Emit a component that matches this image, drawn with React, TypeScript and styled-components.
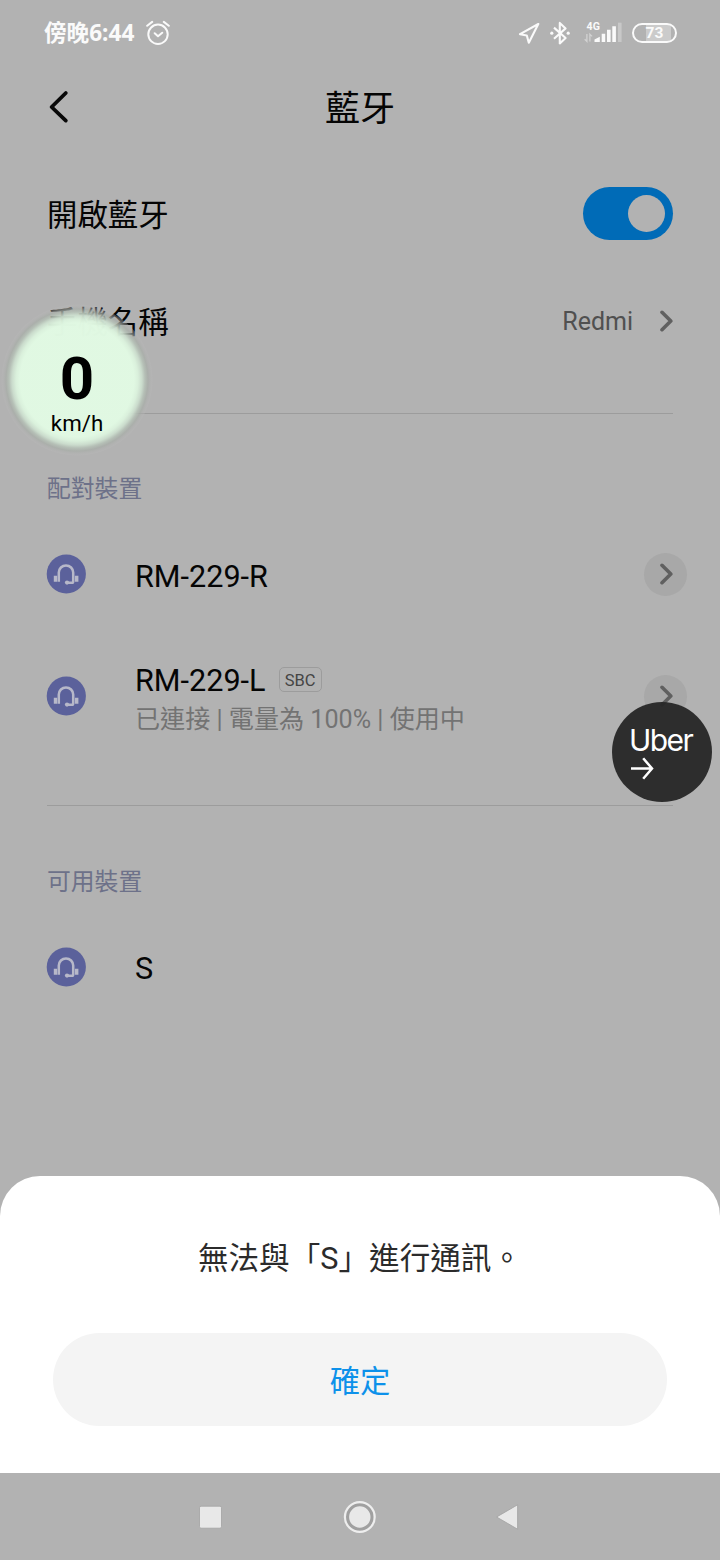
import React from "react";
import styled, { createGlobalStyle } from "styled-components";

const GlobalStyle = createGlobalStyle`
  * { box-sizing: border-box; }
  body { margin: 0; background: #b2b2b2; }
`;

const Screen = styled.div`
  position: relative;
  width: 720px;
  height: 1560px;
  display: flex;
  flex-direction: column;
  background: #b2b2b2;
  color: #050505;
  overflow: hidden;
  font-family: Roboto, "Noto Sans CJK TC", sans-serif;
`;

const StatusBar = styled.header`
  height: 66px;
  padding: 0 43px 0 44px;
  display: flex;
  align-items: center;
  justify-content: space-between;
  color: #fafafa;
`;

const StatusGroup = styled.div<{ $gap: number }>`
  display: flex;
  align-items: center;
  gap: ${(p) => p.$gap}px;
  height: 100%;
`;

const Clock = styled.span`
  font: 700 22.6px/30px "Noto Sans", "Noto Sans CJK TC", sans-serif;
  white-space: nowrap;
`;

const Battery = styled.div`
  width: 45px;
  height: 20px;
  border: 2px solid #fafafa;
  border-radius: 10px;
  display: flex;
  align-items: center;
  justify-content: center;
  background: linear-gradient(90deg, transparent 12px, #cbcbcb 12px, #cbcbcb 37px, transparent 37px);
  font: 700 15.5px/16px Roboto, sans-serif;
`;

const TitleBar = styled.div`
  height: 82px;
  padding: 0 48px;
  display: grid;
  grid-template-columns: 60px 1fr 60px;
  align-items: center;
`;

const Title = styled.h1`
  margin: 0;
  padding-top: 5px;
  text-align: center;
  font-size: 35px;
  font-weight: 400;
  line-height: 46px;
`;

const SettingRow = styled.div<{ $height: number }>`
  height: ${(p) => p.$height}px;
  padding: 0 47px;
  display: flex;
  align-items: center;
  justify-content: space-between;
  font-size: 30.4px;
  line-height: 40px;
`;

const SettingName = styled.span<{ $drop: number }>`
  padding-top: ${(p) => p.$drop}px;
`;

const SettingValue = styled.div`
  display: flex;
  align-items: center;
  gap: 26px;
  font-size: 25px;
  color: #505050;
`;

const ValueText = styled.span`
  padding-top: 2px;
`;

const Toggle = styled.div`
  width: 90px;
  height: 53px;
  padding: 8px;
  border-radius: 27px;
  display: flex;
  justify-content: flex-end;
  background: #006bb7;
`;

const Knob = styled.div`
  width: 37px;
  height: 37px;
  border-radius: 50%;
  background: #b2b2b2;
`;

const Divider = styled.div<{ $space: number }>`
  height: 1px;
  margin: ${(p) => p.$space}px 47px ${(p) => 48 - p.$space}px;
  background: #9c9c9c;
`;

const SectionLabel = styled.h2`
  margin: 0;
  padding: 53px 47px 1px;
  font-size: 23.8px;
  font-weight: 400;
  line-height: 46px;
  color: #6d7189;
`;

const DeviceRow = styled.div`
  height: 122px;
  padding: 0 33px 0 46px;
  display: flex;
  align-items: center;
`;

const DeviceText = styled.div<{ $drop: number }>`
  flex: 1;
  margin-left: 49px;
  padding-top: ${(p) => p.$drop}px;
  display: flex;
  flex-direction: column;
`;

const DeviceName = styled.div`
  display: flex;
  align-items: center;
  gap: 13px;
  font-size: 30.6px;
  line-height: 40px;
`;

const DeviceStatus = styled.div`
  padding-top: 1px;
  font-size: 25.1px;
  line-height: 36px;
  color: #737373;
`;

const Codec = styled.span`
  width: 43px;
  height: 25px;
  margin-bottom: 4px;
  border: 1px solid #9c9c9c;
  border-radius: 5px;
  text-align: center;
  font-size: 16.5px;
  line-height: 25px;
  color: #454545;
`;

const DetailButton = styled.div`
  width: 43px;
  height: 43px;
  border-radius: 50%;
  display: flex;
  align-items: center;
  justify-content: center;
  background: #a8a8a8;
`;

const Sheet = styled.section`
  margin-top: auto;
  height: 297px;
  padding: 63px 53px 0;
  border-radius: 40px 40px 0 0;
  background: #fff;
  text-align: center;
`;

const Message = styled.p`
  margin: 0 0 54px;
  font-size: 30.6px;
  line-height: 40px;
  color: #2b2b2b;
`;

const ConfirmButton = styled.button`
  display: block;
  width: 614px;
  height: 93px;
  padding: 4px 0 0;
  border: 0;
  border-radius: 47px;
  background: #f4f4f4;
  color: #0d91ea;
  font: 400 30.3px/40px Roboto, "Noto Sans CJK TC", sans-serif;
`;

const NavBar = styled.nav`
  height: 87px;
  padding: 0 199px 0 197px;
  display: flex;
  align-items: center;
  justify-content: space-between;
`;

const SpeedBubble = styled.div`
  position: absolute;
  left: 1px;
  top: 304px;
  width: 152px;
  height: 152px;
  padding-top: 51px;
  border-radius: 50%;
  display: flex;
  flex-direction: column;
  align-items: center;
  color: #000;
  background: radial-gradient(
    circle closest-side,
    rgba(225, 249, 227, 0.99) 0 57px,
    rgba(219, 242, 221, 0.97) 61px,
    rgba(204, 222, 206, 0.94) 65px,
    rgba(182, 194, 183, 0.86) 68px,
    rgba(168, 174, 168, 0.72) 71px,
    rgba(176, 178, 176, 0.5) 73px,
    rgba(184, 184, 184, 0.35) 75px,
    transparent 76px
  );
`;

const Speed = styled.strong`
  font-size: 60px;
  font-weight: 700;
  line-height: 48px;
`;

const SpeedUnit = styled.span`
  margin-top: 6px;
  font-size: 22.3px;
  line-height: 28px;
`;

const UberBubble = styled.div`
  position: absolute;
  left: 612px;
  top: 702px;
  width: 100px;
  height: 100px;
  padding: 21px 0 0 17px;
  border-radius: 50%;
  display: flex;
  flex-direction: column;
  background: rgba(38, 38, 38, 0.95);
  color: #fff;
`;

const UberName = styled.span`
  font: 400 30px/34px Inter, sans-serif;
  letter-spacing: -1.6px;
`;

const Chevron = ({ color = "#606060" }: { color?: string }) => (
  <svg width="14" height="24" viewBox="0 0 14 24" fill="none" stroke={color} strokeWidth="3.6" strokeLinecap="round" strokeLinejoin="round">
    <path d="M3 3.3 11.8 12 3 20.7" />
  </svg>
);

const HeadsetIcon = () => (
  <svg width="40" height="40" viewBox="0 0 40 40">
    <circle cx="20.3" cy="20" r="19.6" fill="#5b619b" />
    <path d="M12.8 27.8V18.6a7.2 7.2 0 0 1 14.4 0v8.8q0 1.3-1.3 1.3H21" fill="none" stroke="#b7b8c9" strokeWidth="2.5" />
    <path d="M7.8 21.8h3.4v6H7.8zM28.9 21.8H32.4v6h-3.5z" fill="#b7b8c9" />
    <circle cx="21" cy="28.6" r="2.1" fill="#b7b8c9" />
  </svg>
);

const AlarmIcon = () => (
  <svg width="24" height="26" viewBox="0 0 24 26" fill="none" stroke="#fafafa" strokeWidth="2" strokeLinecap="round" strokeLinejoin="round">
    <circle cx="12" cy="14.3" r="9.7" />
    <path d="M8.7 13.2 12 16.2l4.2-3.5M1.2 5.8l5-3.9M22.8 5.8l-5-3.9" />
  </svg>
);

const LocationIcon = () => (
  <svg width="22" height="22" viewBox="0 0 22 22" fill="none" stroke="#fafafa" strokeWidth="2.1" strokeLinejoin="round">
    <path d="M20.3 2 2 12.2l6.8 1.3 2 7.3z" />
  </svg>
);

const BluetoothIcon = () => (
  <svg width="20" height="24" viewBox="0 0 20 24" fill="none" stroke="#fafafa" strokeWidth="2.1" strokeLinejoin="round">
    <path d="M4 6.6 15.6 17 9.8 22.4V1.9l5.8 5.5L4 17.8" />
    <circle cx="1.8" cy="12.2" r="1.6" fill="#fafafa" stroke="none" />
    <circle cx="18.2" cy="12.2" r="1.6" fill="#fafafa" stroke="none" />
  </svg>
);

const SignalIcon = () => (
  <svg width="38" height="24" viewBox="0 0 38 24" fill="#fafafa">
    <text x="2.6" y="8.8" fontFamily="Roboto, sans-serif" fontWeight="700" fontSize="10.6">4G</text>
    <path d="M10.5 21v-2.5l5.3-2.7V21zM17.7 12.7h3.5V21h-3.5zM23 8.8h3.6V21H23zM28.3 5.2h3.6V21h-3.6z" />
    <path d="M34 1.7h3.6V21H34z" fill="#c8c8c8" />
    <path d="M2.9 13v7.4L.7 18.2M5.9 20.6v-7.4l2.2 2.2" fill="none" stroke="#d2d2d2" strokeWidth="1.3" />
  </svg>
);

const BackArrow = () => (
  <svg width="22" height="34" viewBox="0 0 22 34" fill="none" stroke="#080808" strokeWidth="3.8" strokeLinecap="round" strokeLinejoin="round">
    <path d="M17.8 3 3.6 17l14.2 13.6" />
  </svg>
);

const UberArrow = () => (
  <svg width="26" height="24" viewBox="0 0 26 24" fill="none" stroke="#fff" strokeWidth="2.5">
    <path d="M2 11.5h21M14.2 1.3 23 11.5l-8.8 10.2" />
  </svg>
);

const RecentsIcon = () => (
  <svg width="28" height="26" viewBox="0 0 28 26">
    <rect x="2.5" y="2.2" width="22" height="22" rx="1.5" fill="#e8e8e8" stroke="#a2a2a2" strokeWidth="0.8" />
  </svg>
);

const HomeIcon = () => (
  <svg width="34" height="34" viewBox="0 0 34 34">
    <circle cx="16.8" cy="17" r="12.2" fill="#e8e8e8" stroke="#a0a0a0" strokeWidth="3" />
    <circle cx="16.8" cy="17" r="14.9" fill="none" stroke="#eee" strokeWidth="2.2" />
  </svg>
);

const BackIcon = () => (
  <svg width="26" height="28" viewBox="0 0 26 28">
    <path d="M22.6 1.8v24.4L1.6 14z" fill="#e8e8e8" stroke="#a2a2a2" strokeWidth="0.8" strokeLinejoin="round" />
  </svg>
);

export default function App() {
  return (
    <>
      <GlobalStyle />
      <Screen>
        <StatusBar>
          <StatusGroup $gap={12}>
            <Clock>傍晚6:44</Clock>
            <AlarmIcon />
          </StatusGroup>
          <StatusGroup $gap={14}>
            <StatusGroup $gap={10}>
              <LocationIcon />
              <BluetoothIcon />
            </StatusGroup>
            <StatusGroup $gap={10}>
              <SignalIcon />
              <Battery>73</Battery>
            </StatusGroup>
          </StatusGroup>
        </StatusBar>
        <TitleBar>
          <BackArrow />
          <Title>藍牙</Title>
        </TitleBar>
        <SettingRow $height={130}>
          <SettingName $drop={6}>開啟藍牙</SettingName>
          <Toggle><Knob /></Toggle>
        </SettingRow>
        <SettingRow $height={86}>
          <SettingName $drop={4}>手機名稱</SettingName>
          <SettingValue>
            <ValueText>Redmi</ValueText>
            <Chevron />
          </SettingValue>
        </SettingRow>
        <Divider $space={49} />
        <SectionLabel>配對裝置</SectionLabel>
        <DeviceRow>
          <HeadsetIcon />
          <DeviceText $drop={5}><DeviceName>RM-229-R</DeviceName></DeviceText>
          <DetailButton><Chevron /></DetailButton>
        </DeviceRow>
        <DeviceRow>
          <HeadsetIcon />
          <DeviceText $drop={7}>
            <DeviceName>RM-229-L <Codec>SBC</Codec></DeviceName>
            <DeviceStatus>已連接 | 電量為 100% | 使用中</DeviceStatus>
          </DeviceText>
          <DetailButton><Chevron /></DetailButton>
        </DeviceRow>
        <Divider $space={48} />
        <SectionLabel>可用裝置</SectionLabel>
        <DeviceRow>
          <HeadsetIcon />
          <DeviceText $drop={3}><DeviceName>S</DeviceName></DeviceText>
        </DeviceRow>
        <Sheet>
          <Message>無法與「S」進行通訊。</Message>
          <ConfirmButton>確定</ConfirmButton>
        </Sheet>
        <NavBar>
          <RecentsIcon />
          <HomeIcon />
          <BackIcon />
        </NavBar>
        <SpeedBubble>
          <Speed>0</Speed>
          <SpeedUnit>km/h</SpeedUnit>
        </SpeedBubble>
        <UberBubble>
          <UberName>Uber</UberName>
          <UberArrow />
        </UberBubble>
      </Screen>
    </>
  );
}
